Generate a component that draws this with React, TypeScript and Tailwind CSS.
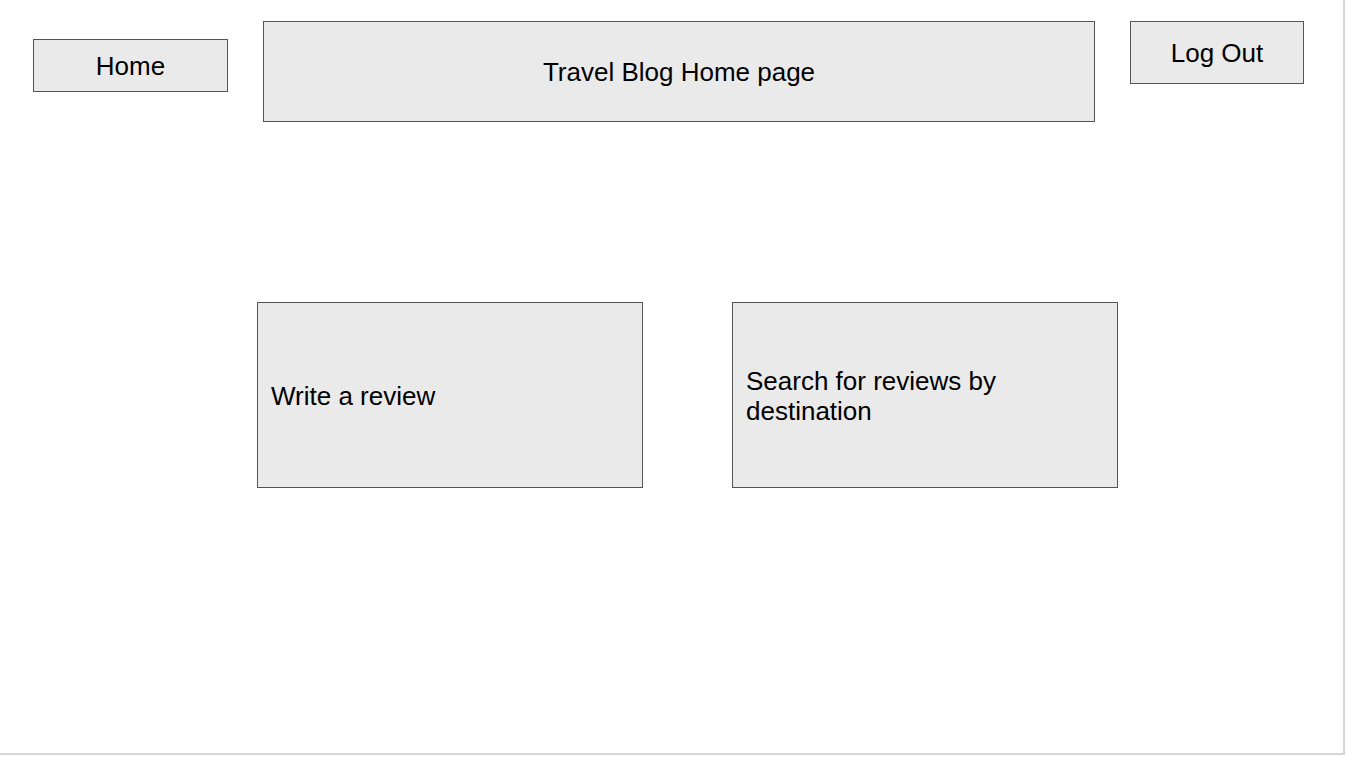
import React from "react";

export default function App() {
  const box = "bg-[#eaeaea] border border-[#555555] text-black pt-[2px]";
  return (
    <div className="w-[1346px] h-[758px] bg-white" style={{ fontFamily: '"Liberation Sans", Arial, sans-serif' }}>
      <div className="w-[1345px] h-[755px] border-r-2 border-b-2 border-[#d6d6d6] bg-white">
        <div className="flex items-start pl-[33px]">
          <div className={`${box} mt-[39px] w-[195px] h-[53px] flex items-center justify-center text-[26px]`}>Home</div>
          <div className={`${box} ml-[35px] mt-[21px] w-[832px] h-[101px] flex items-center justify-center text-[26px]`}>Travel Blog Home page</div>
          <div className={`${box} ml-[35px] mt-[21px] w-[174px] h-[63px] flex items-center justify-center text-[26px]`}>Log Out</div>
        </div>
        <div className="flex pl-[257px] mt-[180px] gap-[89px]">
          <div className={`${box} w-[386px] h-[186px] flex items-center px-[13px] text-[26px] leading-[30px]`}>Write a review</div>
          <div className={`${box} w-[386px] h-[186px] flex items-center px-[13px] text-[26px] leading-[30px]`}>
            <span className="w-[320px]">Search for reviews by destination</span>
          </div>
        </div>
      </div>
    </div>
  );
}
